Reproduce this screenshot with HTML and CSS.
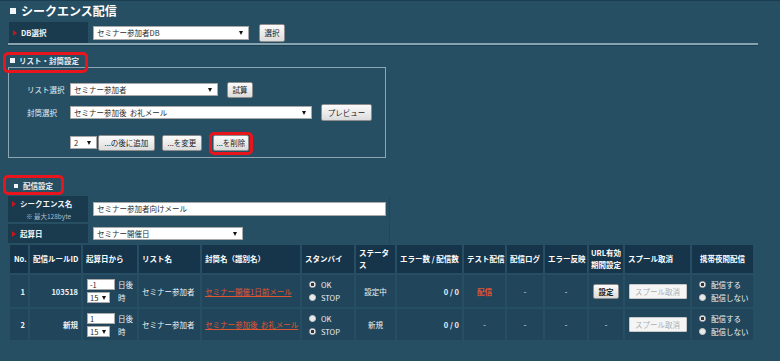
FILE: index.html
```html
<!DOCTYPE html>
<html lang="ja">
<head>
<meta charset="utf-8">
<title>シークエンス配信</title>
<link rel="stylesheet" href="styles.css">
</head>
<body>
<div class="page">
  <h1 class="title"><span class="sq big"></span>シークエンス配信</h1>

  <div class="db-row">
    <div class="lbl"><span class="tri"></span>DB選択</div>
    <div class="val">
      <div class="sel w-db">セミナー参加者DB</div>
      <button class="btn b-db">選択</button>
    </div>
  </div>
  <div class="rule"></div>

  <section class="sec sec-list">
    <h2 class="sec-h"><span class="sq"></span>リスト・封筒設定</h2>
    <span class="mark mark-list"></span>
    <div class="box">
      <div class="brow r1">
        <span class="blbl">リスト選択</span>
        <div class="sel w-list">セミナー参加者</div>
        <button class="btn b-calc">試算</button>
      </div>
      <div class="brow r2">
        <span class="blbl">封筒選択</span>
        <div class="sel w-env">セミナー参加後&nbsp;&nbsp;お礼メール</div>
        <button class="btn b-prev">プレビュー</button>
      </div>
      <div class="brow r3">
        <span class="blbl"></span>
        <div class="sel w-num">2</div>
        <button class="btn b-add">...の後に追加</button>
        <button class="btn b-chg">...を変更</button>
        <span class="hl"><button class="btn b-del">...を削除</button></span>
      </div>
    </div>
  </section>

  <section class="sec sec-deliv">
    <h2 class="sec-h"><span class="sq small"></span>配信設定</h2>
    <span class="mark mark-deliv"></span>
    <div class="form">
      <div class="lbl tall">
        <div class="lt"><span class="tri"></span>シークエンス名</div>
        <div class="note">※ 最大128byte</div>
      </div>
      <div class="fval"><div class="inp w-name">セミナー参加者向けメール</div></div>
      <div class="lbl short"><span class="tri"></span>起算日</div>
      <div class="fval"><div class="sel w-base">セミナー開催日</div></div>
    </div>
  </section>

  <table class="rules">
    <colgroup>
      <col class="k1"><col class="k2"><col class="k3"><col class="k4"><col class="k5"><col class="k6"><col class="k7">
      <col class="k8"><col class="k9"><col class="k10"><col class="k11"><col class="k12"><col class="k13"><col class="k14">
    </colgroup>
    <thead>
      <tr>
        <th>No.</th>
        <th>配信ルールID</th>
        <th>起算日から</th>
        <th>リスト名</th>
        <th>封筒名（識別名）</th>
        <th>スタンバイ</th>
        <th>ステータ<br>ス</th>
        <th>エラー数 / 配信数</th>
        <th>テスト配信</th>
        <th>配信ログ</th>
        <th>エラー反映</th>
        <th class="c">URL有効<br>期間設定</th>
        <th>スプール取消</th>
        <th class="c">携帯夜間配信</th>
      </tr>
    </thead>
    <tbody>
      <tr class="row1">
        <td class="r">1</td>
        <td class="r">103518</td>
        <td>
          <div class="base">
            <span class="inp w-day">-1</span><span>日後</span>
            <span class="sel w-hr">15</span><span>時</span>
          </div>
        </td>
        <td>セミナー参加者</td>
        <td><a class="lnk" href="#">セミナー開催1日前メール</a></td>
        <td>
          <div class="radios">
            <span class="rd"><span class="dot on"></span>OK</span>
            <span class="rd"><span class="dot"></span>STOP</span>
          </div>
        </td>
        <td class="c">設定中</td>
        <td class="r">0 / 0</td>
        <td class="c"><a class="test" href="#">配信</a></td>
        <td class="c">-</td>
        <td class="c">-</td>
        <td class="c"><button class="btn b-set">設定</button></td>
        <td class="c"><button class="btn spool">スプール取消</button></td>
        <td>
          <div class="radios">
            <span class="rd"><span class="dot on"></span>配信する</span>
            <span class="rd"><span class="dot"></span>配信しない</span>
          </div>
        </td>
      </tr>
      <tr class="row2">
        <td class="r">2</td>
        <td class="r">新規</td>
        <td>
          <div class="base">
            <span class="inp w-day">1</span><span>日後</span>
            <span class="sel w-hr">15</span><span>時</span>
          </div>
        </td>
        <td>セミナー参加者</td>
        <td><a class="lnk" href="#">セミナー参加後&nbsp;&nbsp;お礼メール</a></td>
        <td>
          <div class="radios">
            <span class="rd"><span class="dot"></span>OK</span>
            <span class="rd"><span class="dot on"></span>STOP</span>
          </div>
        </td>
        <td class="c">新規</td>
        <td class="r">0 / 0</td>
        <td class="c">-</td>
        <td class="c">-</td>
        <td class="c">-</td>
        <td class="c">-</td>
        <td class="c"><button class="btn spool">スプール取消</button></td>
        <td>
          <div class="radios">
            <span class="rd"><span class="dot on"></span>配信する</span>
            <span class="rd"><span class="dot"></span>配信しない</span>
          </div>
        </td>
      </tr>
    </tbody>
  </table>
</div>
</body>
</html>
```

FILE: styles.css
```css
html, body {
  margin: 0;
  padding: 0;
}
body {
  background: #274f63;
  font-family: "Noto Sans CJK JP", "Noto Sans", sans-serif;
  font-size: 7.5px;
  line-height: 1.2;
  color: #e9eff3;
  overflow: hidden;
}
.page {
  border-top: 1px solid #1b3d50;
  padding: 0 22px 0 8px;
  height: 360px;
}

/* title */
.title {
  margin: 0;
  height: 20px;
  display: flex;
  align-items: center;
  padding-left: 2px;
  font-size: 12px;
  font-weight: bold;
  color: #ffffff;
}
.sq {
  display: inline-block;
  width: 5px;
  height: 5px;
  background: #f2f5f7;
  margin-right: 4px;
}
.sq.big {
  width: 6px;
  height: 6px;
  margin-right: 5px;
}
.sq.small {
  width: 4px;
  height: 4px;
  margin-right: 5px;
}

/* label cells */
.lbl {
  background: #1a3a4e;
  display: flex;
  align-items: center;
  padding-left: 4px;
  font-weight: bold;
  color: #f2f6f8;
}
.tri {
  display: inline-block;
  width: 0;
  height: 0;
  border-left: 4px solid #c8161d;
  border-top: 3px solid transparent;
  border-bottom: 3px solid transparent;
  margin-right: 4px;
}

/* DB row */
.db-row {
  display: flex;
  height: 21px;
  margin-top: 1px;
}
.db-row .lbl {
  width: 75px;
  margin-left: 1px;
}
.db-row .val {
  display: flex;
  align-items: center;
  padding-left: 5px;
  gap: 10px;
}
.rule {
  width: 750px;
  border-top: 2px solid #88a3b0;
  border-bottom: 1px solid #1c4154;
}

/* form controls */
.sel, .inp {
  position: relative;
  box-sizing: border-box;
  background: #ffffff;
  border: 1px solid #a9a9a9;
  height: 13px;
  line-height: 11px;
  padding-left: 3px;
  color: #2a2a2a;
  white-space: nowrap;
  overflow: hidden;
}
.sel::after {
  content: "";
  position: absolute;
  right: 5px;
  top: 4px;
  border-top: 4px solid #111;
  border-left: 2px solid transparent;
  border-right: 2px solid transparent;
}
.btn {
  box-sizing: border-box;
  font: inherit;
  font-size: 7.5px;
  color: #1a1a1a;
  background: linear-gradient(#fbfbfb, #dcdcdc);
  border: 1px solid #8e8e8e;
  border-radius: 2px;
  padding: 0;
  height: 16px;
  line-height: 14px;
  white-space: nowrap;
  cursor: pointer;
}

.w-db { width: 156px; height: 14px; }
.b-db { width: 26px; height: 18px; }

/* sections */
.sec {
  position: relative;
}
.sec-h {
  margin: 0;
  height: 13px;
  display: flex;
  align-items: center;
  padding-left: 2px;
  font-size: 7.5px;
  font-weight: bold;
  color: #e6edf1;
}
.sec-list .sec-h { margin-top: 8px; }
.sec-deliv .sec-h { margin-top: 21px; padding-left: 6px; }

.mark {
  position: absolute;
  box-sizing: border-box;
  border: 3px solid #e8151c;
  border-radius: 5px;
}
.mark-list { left: -5px; top: -2px; width: 85px; height: 21px; }
.mark-deliv { left: -5px; top: -4px; width: 61px; height: 20px; }

.box {
  box-sizing: border-box;
  width: 378px;
  height: 91px;
  border: 1px solid #8ea6b2;
  padding: 13px 0 0 18px;
}
.brow {
  display: flex;
  align-items: center;
  height: 17px;
}
.brow.r2 { margin-top: 6px; }
.brow.r3 { margin-top: 13px; }
.blbl {
  width: 43px;
  flex: none;
  color: #e6edf1;
}
.w-list { width: 148px; }
.w-env { width: 242px; }
.w-num { width: 27px; }
.b-calc { width: 26px; margin-left: 9px; }
.b-prev { width: 51px; height: 17px; margin-left: 9px; }
.b-add { width: 57px; margin-left: 1px; }
.b-chg { width: 40px; margin-left: 7px; }
.hl {
  position: relative;
  display: inline-flex;
  margin-left: 11px;
}
.hl::after {
  content: "";
  position: absolute;
  left: -4px;
  right: -4px;
  top: -3px;
  bottom: -4px;
  border: 3px solid #e8151c;
  border-radius: 5px;
}
.b-del { width: 36px; }

/* delivery form */
.form {
  display: grid;
  grid-template-columns: 80px 1fr;
  grid-template-rows: 26px 19px;
  row-gap: 2px;
  margin-top: 4px;
  width: 382px;
}
.form .lbl.tall {
  flex-direction: column;
  align-items: flex-start;
  justify-content: center;
  padding-left: 4px;
}
.form .lbl.short { padding-left: 4px; }
.lt {
  display: flex;
  align-items: center;
  height: 10px;
  line-height: 10px;
}
.note {
  font-size: 6.5px;
  line-height: 8px;
  height: 8px;
  font-weight: normal;
  color: #a9bcc7;
  padding-left: 14px;
  margin-top: 3px;
}
.fval {
  display: flex;
  align-items: center;
  padding-left: 5px;
  border-right: 1px solid #21475a;
}
.w-name { width: 293px; height: 14px; line-height: 12px; }
.w-base { width: 150px; }

/* rules table */
.rules {
  table-layout: fixed;
  border-collapse: separate;
  border-spacing: 2px;
  width: 747px;
  margin: 0;
}
.k1 { width: 18px; }
.k2 { width: 51px; }
.k3 { width: 54px; }
.k4 { width: 61px; }
.k5 { width: 98px; }
.k6 { width: 52px; }
.k7 { width: 39px; }
.k8 { width: 65px; }
.k9 { width: 41px; }
.k10 { width: 36px; }
.k11 { width: 42px; }
.k12 { width: 34px; }
.k13 { width: 65px; }
.k14 { width: 61px; }

.rules th {
  background: #17354a;
  color: #ffffff;
  font-weight: bold;
  text-align: left;
  height: 28px;
  padding: 0 3px;
  white-space: nowrap;
  line-height: 12px;
  box-sizing: border-box;
}
.rules th:first-child { padding-left: 4px; }
.rules th.c { text-align: center; padding: 0; }
.rules td {
  background: #21455a;
  color: #edf2f5;
  padding: 0 3px;
  white-space: nowrap;
  box-sizing: border-box;
}
.row1 td { height: 32px; }
.row2 td { height: 31px; }
.rules td.r { text-align: right; font-weight: bold; }
.rules td.c { text-align: center; }

.base {
  display: grid;
  grid-template-columns: 28px auto;
  column-gap: 3px;
  row-gap: 2px;
  align-items: center;
  padding-left: 1px;
}
.base .inp, .base .sel { height: 11px; line-height: 9px; padding-left: 2px; }
.w-day { width: 28px; }
.w-hr { width: 23px; }
.base .sel::after { top: 3px; right: 3px; }

.lnk {
  color: #e2562e;
  text-decoration: underline;
}
.test {
  color: #e2562e;
  text-decoration: none;
  font-weight: bold;
}

.radios {
  display: flex;
  flex-direction: column;
  padding-left: 4px;
}
.rd {
  display: flex;
  align-items: center;
  height: 13px;
}
.dot {
  box-sizing: border-box;
  width: 7px;
  height: 7px;
  border-radius: 50%;
  background: #e9e9e9;
  border: 1px solid #cfcfcf;
  margin-right: 5px;
}
.dot.on {
  background: radial-gradient(circle, #333 0 1.6px, #ffffff 2.1px);
  border-color: #bdbdbd;
}

.b-set { width: 26px; height: 15px; line-height: 13px; font-weight: bold; }
.spool {
  width: 58px;
  height: 15px;
  line-height: 13px;
  background: #f5f5f5;
  border: 1px solid #c8c8c8;
  color: #adadad;
  border-radius: 1px;
}
```
